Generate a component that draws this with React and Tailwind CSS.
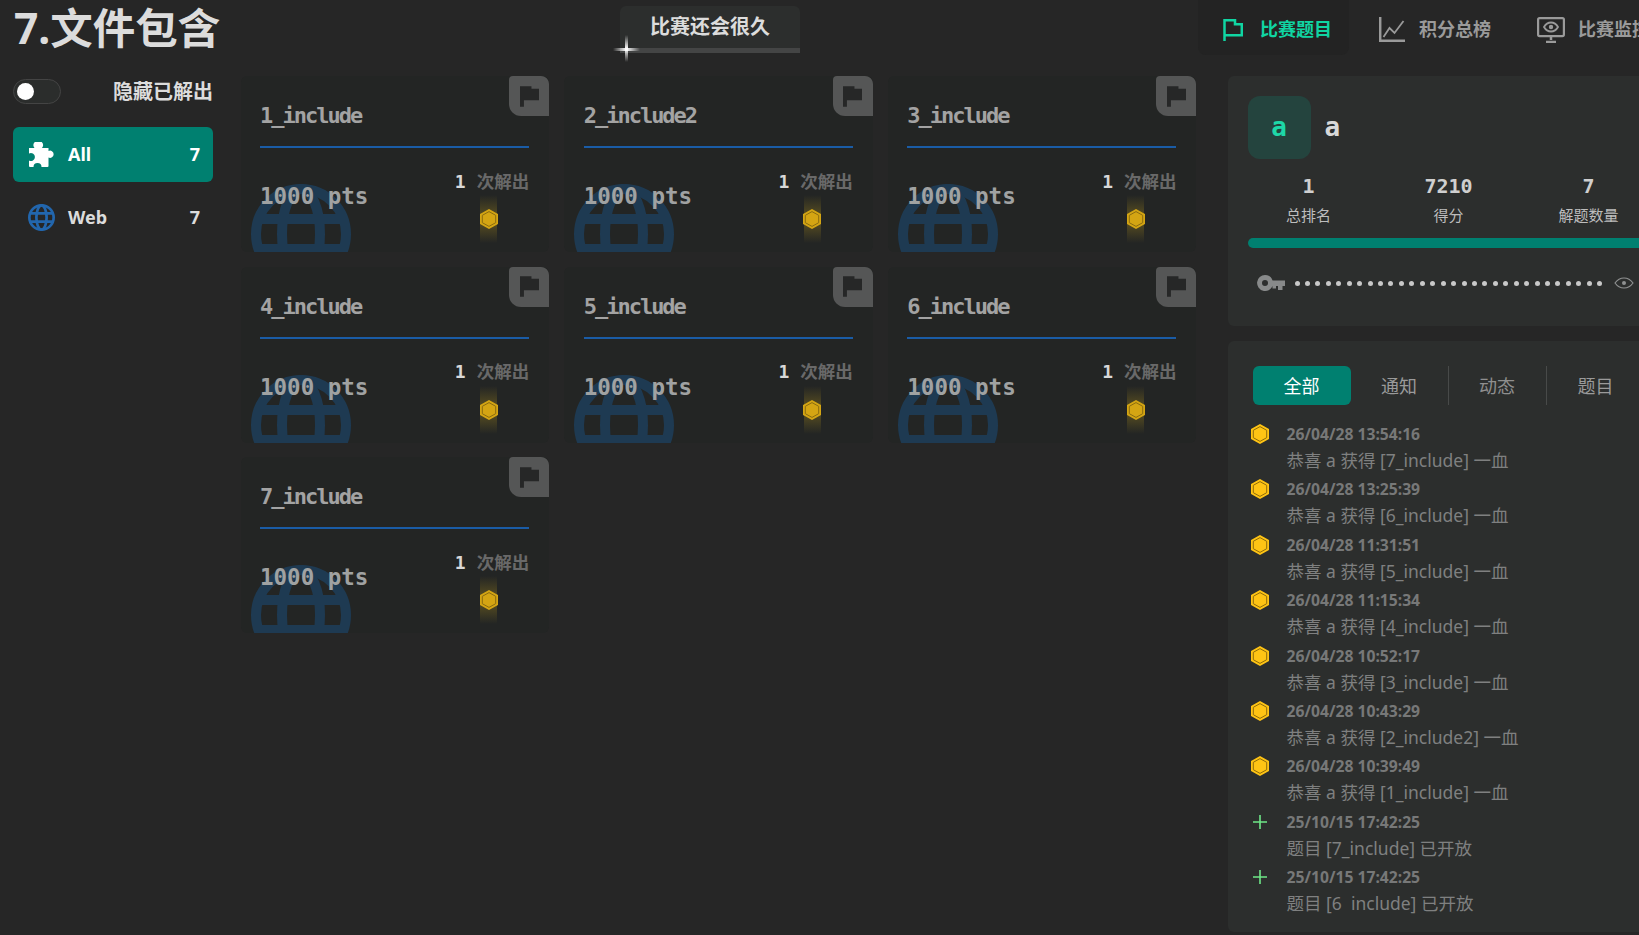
const sans = { fontFamily: '"Noto Sans", "Noto Sans CJK SC", sans-serif' }
const mono = { fontFamily: '"DejaVu Sans Mono", monospace' }

const cards = ['1_include', '2_include2', '3_include', '4_include', '5_include', '6_include', '7_include']

const feed = [
  { time: '26/04/28 13:54:16', text: '恭喜 a 获得 [7_include] 一血', blood: true },
  { time: '26/04/28 13:25:39', text: '恭喜 a 获得 [6_include] 一血', blood: true },
  { time: '26/04/28 11:31:51', text: '恭喜 a 获得 [5_include] 一血', blood: true },
  { time: '26/04/28 11:15:34', text: '恭喜 a 获得 [4_include] 一血', blood: true },
  { time: '26/04/28 10:52:17', text: '恭喜 a 获得 [3_include] 一血', blood: true },
  { time: '26/04/28 10:43:29', text: '恭喜 a 获得 [2_include2] 一血', blood: true },
  { time: '26/04/28 10:39:49', text: '恭喜 a 获得 [1_include] 一血', blood: true },
  { time: '25/10/15 17:42:25', text: '题目 [7_include] 已开放' },
  { time: '25/10/15 17:42:25', text: '题目 [6\u00a0\u00a0include] 已开放' },
]

function Hex({ className, fill, line }) {
  return (
    <svg viewBox="0 0 18 20" className={className}>
      <polygon points="9,0 18,5 18,15 9,20 0,15 0,5" fill={fill} />
      <polygon points="9,2.6 15.7,6.3 15.7,13.7 9,17.4 2.3,13.7 2.3,6.3" fill="none" stroke={line} strokeWidth="1" />
    </svg>
  )
}

function NavFlag() {
  return (
    <svg viewBox="0 0 20 22" className="h-[22px] w-5" fill="none" stroke="currentColor" strokeWidth="2.500">
      <path d="M1.500 22V1.200h10.500v4h6.800v11H1.500" />
    </svg>
  )
}

function NavChart() {
  return (
    <svg viewBox="0 0 26 25" className="h-[25px] w-[26px]" fill="none" stroke="currentColor" strokeWidth="2.500">
      <path d="M1.200 0v23.800H26" />
      <path d="M4.500 20l6-9 5 5 9-12" strokeWidth="1.800" />
    </svg>
  )
}

function NavMonitor() {
  return (
    <svg viewBox="0 0 28 26" className="h-[26px] w-7" fill="none" stroke="currentColor" strokeWidth="2.200">
      <rect x="1.100" y="1.100" width="25.800" height="18" rx="1.500" />
      <path d="M7 10c2-3.500 4.500-4.500 7-4.500s5 1 7 4.500c-2 3.500-4.500 4.500-7 4.500S9 13.500 7 10z" strokeWidth="1.800" />
      <circle cx="14" cy="10" r="2.200" fill="currentColor" stroke="none" />
      <path d="M14 19v4M9 25h10" strokeWidth="2.500" />
    </svg>
  )
}

function Puzzle() {
  return (
    <svg viewBox="0 0 27 25" className="h-[25px] w-[27px]" fill="currentColor">
      <path d="M1 6H6.500A4.700 4.700 0 1 1 14 6H20.500V9A3.600 3.600 0 1 1 20.500 15.500V24a1 1 0 0 1-1 1H13.500A4 4 0 1 0 5.500 25H2a1 1 0 0 1-1-1V18.500A4 4 0 1 0 1 11.500Z" />
    </svg>
  )
}

function Globe({ className }) {
  return (
    <svg viewBox="0 0 100 100" className={className} fill="none" stroke="currentColor" strokeWidth="10">
      <circle cx="50" cy="50" r="45" />
      <ellipse cx="50" cy="50" rx="19" ry="45" />
      <path d="M10 35h80M10 65h80" />
    </svg>
  )
}

function Card({ name }) {
  return (
    <div className="relative h-[176px] overflow-hidden rounded-md bg-[#232524] pl-[19.500px] pr-[20px] pt-[23px]">
      <div className="absolute right-0 top-0 flex h-10 w-10 items-center justify-center rounded-tl-sm rounded-tr-lg rounded-bl-xl bg-[#555656]">
        <svg viewBox="0 0 58 63" className="h-[21px] w-[19px]" fill="#262727">
          <path d="M0 0H35V8H58V43H12V63H0Z" />
        </svg>
      </div>
      <Globe className="absolute left-[10px] top-[108px] h-[100px] w-[100px] text-[#1e3a52]" />
      <div className="relative h-[49px] border-b-2 border-[#1a5ca6]">
        <div className="text-[22px] font-bold leading-[34px] tracking-[-2px] text-[#a3a3a3]" style={mono}>{name}</div>
      </div>
      <div className="relative flex justify-between">
        <div className="mt-[33px] text-[22.500px] font-bold leading-[30px] text-[#a0a2a2]" style={mono}>1000 pts</div>
        <div className="mt-[21px] flex flex-col items-end">
          <div className="flex h-6 items-center gap-[11px]">
            <span className="text-[18px] font-bold text-[#d8d8d8]" style={mono}>1</span>
            <span className="text-[17.500px] font-bold text-[#696969]" style={{ fontFamily: '"Noto Sans CJK SC", sans-serif' }}>次解出</span>
          </div>
          <div className="mr-[32px] mt-[2px] flex h-12 w-[17px] items-center justify-center bg-gradient-to-b from-transparent via-[#5f5320] to-transparent">
            <Hex className="h-5 w-[18px] shrink-0" fill="#d4a513" line="#8a6c10" />
          </div>
        </div>
      </div>
    </div>
  )
}

function Stat({ value, label }) {
  return (
    <div className="flex w-[140px] flex-col items-center">
      <div className="text-[20px] font-bold leading-[28px] text-[#cfcfcf]" style={mono}>{value}</div>
      <div className="mt-[3px] text-[15px] leading-[24px] text-[#bdbdbd]" style={{ fontFamily: '"Noto Sans CJK SC", sans-serif' }}>{label}</div>
    </div>
  )
}

export default function App() {
  return (
    <div className="h-[935px] w-[1639px] overflow-hidden bg-[#262626]" style={sans}>
      <header className="flex h-[76px]">
        <h1 className="w-[620px] shrink-0 pl-[14px] pt-[1px] text-[42.500px] font-bold leading-[54px] text-[#dcdcdc]">7.文件包含</h1>
        <div className="relative mt-[6px] h-[47px] w-[180px] shrink-0 rounded-t-md bg-[#2c2e2d] pt-[8px] text-center text-[20px] font-bold leading-[26px] text-[#dcdcdc]">
          比赛还会很久
          <div className="absolute bottom-0 left-0 h-[5px] w-full bg-[#444545]" />
          <div className="absolute left-[-7px] top-[42px] h-[3px] w-[27px] bg-gradient-to-r from-transparent via-white to-transparent" />
          <div className="absolute left-[5px] top-[29px] h-[27px] w-[3px] bg-gradient-to-b from-transparent via-white to-transparent" />
        </div>
        <nav className="ml-[398px] flex h-[55px] shrink-0 text-[18px] font-bold">
          <div className="flex w-[151px] items-center rounded-b-lg bg-[#232323] pl-[25px] pt-[4px] text-[#10d5a2]">
            <NavFlag />
            <span className="ml-[17px]">比赛题目</span>
          </div>
          <div className="ml-[30px] flex w-[158px] items-center pt-[4px] text-[#9a9a9a]">
            <NavChart />
            <span className="ml-[14px]">积分总榜</span>
          </div>
          <div className="flex items-center whitespace-nowrap pt-[4px] text-[#9a9a9a]">
            <NavMonitor />
            <span className="ml-[13px]">比赛监控</span>
          </div>
        </nav>
      </header>

      <div className="flex">
        <aside className="w-[240.500px] shrink-0 pl-[13px] pr-[27.500px] pt-[3px]">
          <div className="flex h-[25px] items-center justify-between">
            <div className="flex h-[25px] w-[48px] items-center rounded-full border border-[#444] bg-[#2b2d2c] pl-[3px]">
              <div className="h-[17px] w-[17px] rounded-full bg-white" />
            </div>
            <span className="text-[20px] font-bold text-[#dcdcdc]">隐藏已解出</span>
          </div>
          <div className="mt-[23px] flex h-[55px] items-center rounded-md bg-[#008070] pl-[15px] pr-[13px] text-[18px] font-bold text-white">
            <Puzzle />
            <span className="ml-[13px] flex-1">All</span>
            <span>7</span>
          </div>
          <div className="mt-[8px] flex h-[55px] items-center pl-[15px] pr-[13px] text-[18px] font-bold text-[#dcdcdc]">
            <Globe className="h-[27px] w-[27px] text-[#2266ad]" />
            <span className="ml-[13px] flex-1">Web</span>
            <span>7</span>
          </div>
        </aside>

        <main className="grid h-fit w-[956px] shrink-0 grid-cols-3 gap-x-[15px] gap-y-[14.500px]">
          {cards.map((c) => <Card key={c} name={c} />)}
        </main>

        <section className="ml-[31px] w-[451px] shrink-0">
          <div className="h-[250px] rounded-md bg-[#2c2e2d] pl-[20px] pt-[20px]">
            <div className="flex items-center">
              <div className="flex h-[63px] w-[63px] items-center justify-center rounded-xl bg-[#24443e] text-[26px] font-bold text-[#1ed8a8]" style={mono}>a</div>
              <div className="ml-[14px] text-[26px] font-bold text-[#d8d8d8]" style={mono}>a</div>
            </div>
            <div className="-ml-[9px] mt-[13px] flex">
              <Stat value="1" label="总排名" />
              <Stat value="7210" label="得分" />
              <Stat value="7" label="解题数量" />
            </div>
            <div className="mt-[11px] h-[10px] rounded-full bg-[#008070]" />
            <div className="mt-[23px] flex h-6 items-center pl-[9px]">
              <svg viewBox="0 0 28 16" className="h-4 w-7" fill="#888a8a">
                <path d="M8 0a8 8 0 0 1 7.600 5.500H28V11h-2.500v4H21v-4h-2v2.500h-3.500V11A8 8 0 1 1 8 0zm0 5a3 3 0 1 0 0 6 3 3 0 0 0 0-6z" />
              </svg>
              <div className="ml-[10px] flex gap-[5.450px]">
                {Array.from({ length: 30 }).map((_, i) => (
                  <span key={i} className="h-[5px] w-[5px] rounded-full bg-[#c8c8c8]" />
                ))}
              </div>
              <svg viewBox="0 0 20 12" className="ml-[12px] h-3 w-5" fill="none" stroke="#8f9191" strokeWidth="1.200">
                <path d="M1 6c2.500-3.500 6-5 9-5s6.500 1.500 9 5c-2.500 3.500-6 5-9 5s-6.500-1.500-9-5z" />
                <circle cx="10" cy="6" r="2" fill="#8f9191" stroke="none" />
              </svg>
            </div>
          </div>

          <div className="mt-[15px] h-[591px] overflow-hidden rounded-md bg-[#2c2e2d] pl-[23px] pt-[25px]">
            <div className="ml-[2px] flex h-[39px] text-[18px]" style={{ fontFamily: '"Noto Sans CJK SC", sans-serif' }}>
              <div className="flex w-[98px] items-center justify-center rounded-md bg-[#008070] text-white">全部</div>
              <div className="flex w-[98px] items-center justify-center border-r border-[#484a49] text-[#9a9a9a]">通知</div>
              <div className="flex w-[98px] items-center justify-center border-r border-[#484a49] text-[#8f8f8f]">动态</div>
              <div className="flex w-[98px] items-center justify-center text-[#9a9a9a]">题目</div>
            </div>
            <div className="mt-[17px]">
              {feed.map((f, i) => (
                <div key={i} className="flex h-[55.400px]">
                  <div className="flex h-6 w-[18px] shrink-0 items-center justify-center">
                    {f.blood ? (
                      <Hex className="h-5 w-[18px]" fill="#ffc414" line="#8f6c0a" />
                    ) : (
                      <svg viewBox="0 0 14 14" className="h-[14px] w-[14px]" stroke="#6ee787" strokeWidth="1.600">
                        <path d="M7 0v14M0 7h14" />
                      </svg>
                    )}
                  </div>
                  <div className="ml-[18px] whitespace-nowrap">
                    <div className="text-[15.700px] font-bold leading-6 text-[#777878]">{f.time}</div>
                    <div className="text-[17.500px] leading-[28px] text-[#7f8080]">{f.text}</div>
                  </div>
                </div>
              ))}
            </div>
          </div>
        </section>
      </div>
    </div>
  )
}
